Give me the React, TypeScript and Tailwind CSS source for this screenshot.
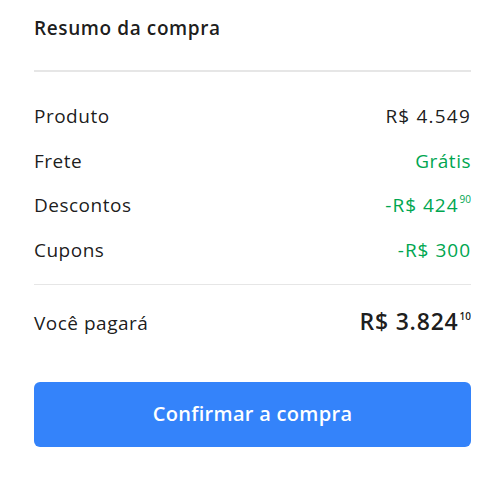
export default function App() {
  return (
    <div className="w-[500px] h-[477px] bg-white pl-[34px] pr-[29px] text-[rgba(0,0,0,0.9)] font-['Open_Sans',sans-serif]">
      <div className="pt-[16px] pb-[30px] border-b-2 border-[#e6e6e6]">
        <h2 className="text-[19px] leading-[24px] font-semibold tracking-[0.6px]">Resumo da compra</h2>
      </div>
      <div className="pt-[32px] pb-[22px] border-b border-[#e6e6e6] flex flex-col gap-[20.5px] text-[19px] leading-[24px] tracking-[0.5px]">
        <div className="flex justify-between">
          <span>Produto</span>
          <span className="tracking-[1.2px]">R$ 4.549</span>
        </div>
        <div className="flex justify-between">
          <span>Frete</span>
          <span className="text-[#00a650]">Grátis</span>
        </div>
        <div className="flex justify-between">
          <span>Descontos</span>
          <span className="text-[#00a650] tracking-[1px]">
            -R$ 424<sup className="text-[10px] align-[4px] ml-[1px] tracking-normal">90</sup>
          </span>
        </div>
        <div className="flex justify-between">
          <span>Cupons</span>
          <span className="text-[#00a650] tracking-[1px]">-R$ 300</span>
        </div>
      </div>
      <div className="pt-[24px] flex justify-between items-baseline text-[19px] leading-[24px] tracking-[0.5px]">
        <span>Você pagará</span>
        <span className="text-[23px] font-semibold tracking-[0.8px]">
          R$ 3.824<sup className="text-[10px] align-[5px] ml-[1px] font-semibold tracking-normal">10</sup>
        </span>
      </div>
      <button className="mt-[47px] w-full h-[65px] rounded-[6px] bg-[#3483fa] text-white text-[20px] font-semibold tracking-[0.3px]">
        Confirmar a compra
      </button>
    </div>
  );
}
